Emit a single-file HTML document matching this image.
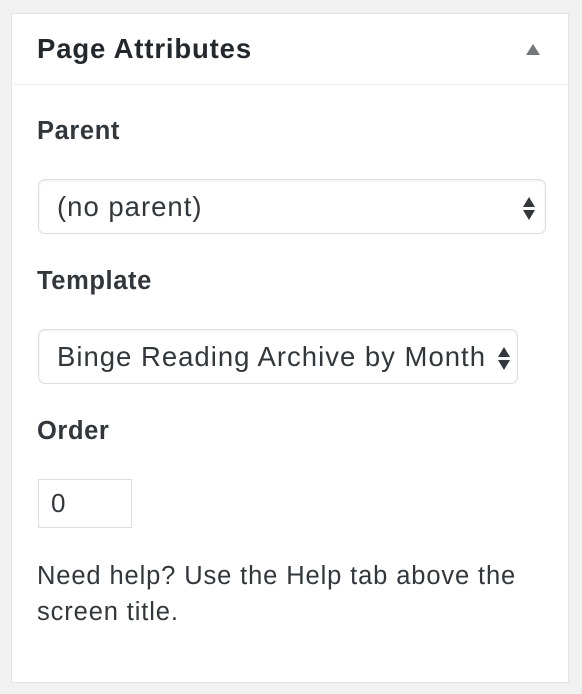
<!DOCTYPE html>
<html><head><style>
body{margin:0;background:#f1f1f1;width:582px;height:694px;font-family:"Liberation Sans",sans-serif;color:#32373c;position:relative;overflow:hidden;}
.box{position:absolute;left:11px;top:13px;width:556px;height:668px;background:#fff;border:1px solid #e5e5e5;}
.hd{position:absolute;left:11px;top:84px;width:558px;height:1px;background:#eee;}
.t{position:absolute;left:37px;top:32px;font-size:27.5px;line-height:34px;font-weight:bold;color:#23282d;letter-spacing:0.85px;}
.arr{position:absolute;left:526px;top:44px;width:0;height:0;border-left:7.5px solid transparent;border-right:7.5px solid transparent;border-bottom:11px solid #72777c;}
.lb{position:absolute;left:37px;font-size:25.5px;line-height:30px;font-weight:bold;color:#32373c;letter-spacing:0.6px;}
.sel{position:absolute;height:55px;border:1px solid #ddd;border-radius:7px;box-shadow:0 1px 2px rgba(0,0,0,.07) inset;font-size:27.5px;line-height:53px;padding-left:18px;box-sizing:border-box;color:#32373c;letter-spacing:1px;white-space:nowrap;}
.ud{position:absolute;right:10px;top:17px;width:12px;height:0;}
.ud:before{content:"";position:absolute;left:0;top:0;border-left:6px solid transparent;border-right:6px solid transparent;border-bottom:10px solid #32373c;}
.ud:after{content:"";position:absolute;left:0;top:13px;border-left:6px solid transparent;border-right:6px solid transparent;border-top:10px solid #32373c;}
.inp{position:absolute;left:38px;top:479px;width:94px;height:49px;border:1px solid #ddd;box-sizing:border-box;font-size:26px;line-height:47px;padding-left:12px;}
.help{position:absolute;left:37px;top:558px;width:540px;font-size:25.5px;line-height:36px;letter-spacing:0.88px;}
</style></head><body>
<div class="box"></div>
<div class="hd"></div>
<div class="t">Page Attributes</div><div class="arr"></div>
<div class="lb" style="top:116px">Parent</div>
<div class="sel" style="left:38px;top:179px;width:508px;">(no parent)<span class="ud"></span></div>
<div class="lb" style="top:266px">Template</div>
<div class="lb" style="top:416px">Order</div>
<div class="sel" style="left:38px;top:329px;width:480px;">Binge Reading Archive by Month<span class="ud" style="right:7px"></span></div>
<div class="inp">0</div>
<div class="help">Need help? Use the Help tab above the<br>screen title.</div>
</body></html>
